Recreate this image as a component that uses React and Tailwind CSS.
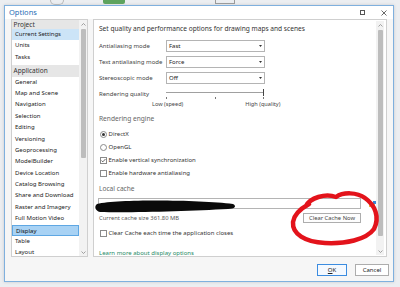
import React from 'react';

const items1 = ['Current Settings', 'Units', 'Tasks'];
const items2 = [
  'General', 'Map and Scene', 'Navigation', 'Selection', 'Editing', 'Versioning',
  'Geoprocessing', 'ModelBuilder', 'Device Location', 'Catalog Browsing',
  'Share and Download', 'Raster and Imagery', 'Full Motion Video', 'Display', 'Table', 'Layout',
];

const Caret = ({ up }) => (
  <svg width="5" height="3" viewBox="0 0 5 3" className="block">
    <path d={up ? 'M0.5 2.5 L2.5 0.5 L4.5 2.5' : 'M0.5 0.5 L2.5 2.5 L4.5 0.5'} stroke="#8a8a8a" strokeWidth="0.8" fill="none" />
  </svg>
);

const Scrollbar = ({ thumbTop, thumbHeight }) => (
  <div className="w-[8px] h-full bg-[#f2f2f2] flex flex-col items-center">
    <div className="h-[8px] flex items-center"><Caret up /></div>
    <div className="w-[5px] bg-[#bdbdbd] rounded-[1px]" style={{ marginTop: thumbTop, height: thumbHeight }} />
    <div className="flex-1" />
    <div className="h-[8px] flex items-center"><Caret /></div>
  </div>
);

const Row = ({ label, value }) => (
  <div className="flex items-center h-[12px]">
    <div className="w-[67px] text-[6px] text-[#444]">{label}</div>
    <div className="w-[99px] h-[12px] border border-[#b4b4b4] bg-white flex items-center justify-between pl-[2px] pr-[2px]">
      <span className="text-[6px] text-[#222]">{value}</span>
      <svg width="3" height="2" viewBox="0 0 3 2"><path d="M0 0 L3 0 L1.5 2 Z" fill="#333" /></svg>
    </div>
  </div>
);

const Radio = ({ label, checked }) => (
  <div className="flex items-center h-[10px]">
    <div className="w-[7px] h-[7px] rounded-full border border-[#8a8a8a] bg-white flex items-center justify-center ml-[0.5px]">
      {checked && <div className="w-[3px] h-[3px] rounded-full bg-[#333]" />}
    </div>
    <span className="ml-[2px] text-[6px] text-[#333]">{label}</span>
  </div>
);

const Check = ({ label, checked }) => (
  <div className="flex items-center h-[10px]">
    <div className="w-[7px] h-[7px] border border-[#8a8a8a] bg-white flex items-center justify-center ml-[0.5px]">
      {checked && (
        <svg width="6" height="5" viewBox="0 0 6 5"><path d="M0.6 2.6 L2.2 4.1 L5.4 0.7" stroke="#333" strokeWidth="0.9" fill="none" /></svg>
      )}
    </div>
    <span className="ml-[2px] text-[6px] text-[#333]">{label}</span>
  </div>
);

export default function App() {
  return (
    <div className="w-[400px] h-[287px] bg-[#eceef1] relative overflow-hidden font-['Noto_Sans',sans-serif]">
      {/* background application strip */}
      <div className="h-[5px] flex items-start">
        <div className="ml-[50px] w-[14px] h-[5px] border-x border-b border-[#b8b8b8] rounded-b-full" />
        <div className="ml-[39px] w-[22px] h-[4px] bg-[#5ea35e] rounded-b-[2px]" />
        <div className="ml-[90px] w-[20px] h-[4px] border-x border-b border-[#9a9a9a]" />
      </div>

      {/* dialog */}
      <div className="ml-[4px] w-[390px] h-[277px] border border-[#7fb0de] bg-[#f6f6f6] flex flex-col shadow-[0_0_3px_rgba(0,0,0,0.15)]">
        {/* title bar */}
        <div className="h-[13px] flex items-center bg-white">
          <span className="ml-[4px] text-[7.5px] text-[#1f6db5] leading-none">Options</span>
          <div className="flex-1" />
          <div className="w-[5px] h-[5px] border border-[#555] mr-[16px]" />
          <svg width="6" height="6" viewBox="0 0 6 6" className="mr-[6px]">
            <path d="M0.5 0.5 L5.5 5.5 M5.5 0.5 L0.5 5.5" stroke="#444" strokeWidth="0.8" />
          </svg>
        </div>

        {/* body */}
        <div className="flex h-[238px] bg-[#f6f6f6]">
          {/* sidebar */}
          <div className="ml-[6px] w-[77px] h-full border border-[#cfcfcf] bg-white flex">
            <div className="flex-1 flex flex-col text-[#222]">
              <div className="h-[9px] leading-[9px] bg-[#e6e6e6] pl-[1.5px] text-[6.5px] text-[#333]">Project</div>
              {items1.map((t, i) => (
                <div key={t} className={`h-[11.4px] leading-[11.4px] pl-[3px] text-[6px] ${i === 0 ? 'bg-[#cce4f7]' : ''}`}>{t}</div>
              ))}
              <div className="mt-[2px] h-[11.4px] leading-[11.4px] bg-[#e6e6e6] pl-[1.5px] text-[6.5px] text-[#333]">Application</div>
              {items2.map((t) => (
                <div
                  key={t}
                  className={`h-[11.4px] leading-[11.4px] pl-[3px] text-[6px] ${t === 'Display' ? 'bg-[#a8d2f4] border border-[#5ea7e3] pl-[2px] leading-[9.4px] text-[#111]' : ''}`}
                >
                  {t}
                </div>
              ))}
            </div>
            <Scrollbar thumbTop={1} thumbHeight={129} />
          </div>

          {/* main panel */}
          <div className="ml-[5px] w-[294px] h-full border border-[#cfcfcf] bg-white flex">
            <div className="flex-1 pl-[5px] pt-[4px] overflow-hidden flex flex-col">
              <div className="h-[10px] leading-[10px] text-[6.6px] text-[#333]">Set quality and performance options for drawing maps and scenes</div>
              <div className="mt-[6px] flex flex-col gap-[4px]">
                <Row label="Antialiasing mode" value="Fast" />
                <Row label="Text antialiasing mode" value="Force" />
                <Row label="Stereoscopic mode" value="Off" />
                <div className="flex items-center h-[12px]">
                  <div className="w-[67px] text-[6px] text-[#444]">Rendering quality</div>
                  <div className="relative w-[100px] h-[12px]">
                    <div className="absolute left-0 right-[3px] top-[4px] h-[1px] bg-[#a0a0a0]" />
                    <div className="absolute right-[2px] top-[1px] w-[1.5px] h-[7px] bg-[#444]" />
                    <div className="absolute left-[0px] top-[9px] w-[1px] h-[2px] bg-[#777]" />
                    <div className="absolute left-[49px] top-[9px] w-[1px] h-[2px] bg-[#777]" />
                    <div className="absolute right-[2px] top-[9px] w-[1px] h-[2px] bg-[#777]" />
                  </div>
                </div>
              </div>
              <div className="h-[8px] leading-[8px] flex text-[5.6px] text-[#444]">
                <span className="ml-[53px]">Low (speed)</span>
                <span className="ml-[62px]">High (quality)</span>
              </div>

              <div className="mt-[6px] h-[10px] leading-[10px] text-[6.6px] text-[#666]">Rendering engine</div>
              <div className="mt-[5px] flex flex-col gap-[3px]">
                <Radio label="DirectX" checked />
                <Radio label="OpenGL" />
                <Check label="Enable vertical synchronization" checked />
                <Check label="Enable hardware antialiasing" />
              </div>

              <div className="mt-[6px] h-[10px] leading-[10px] text-[6.6px] text-[#666]">Local cache</div>
              <div className="mt-[4px] flex items-center -ml-[1px]">
                <div className="w-[263px] h-[11px] border border-[#b4b4b4] bg-white" />
                <svg width="7" height="6" viewBox="0 0 7 6" className="ml-[8px]">
                  <path d="M0 1 L2.5 1 L3 2 L6 2 L6 6 L0 6 Z" fill="#e8b64a" />
                  <rect x="4" y="0" width="3" height="3" fill="#3d86d4" />
                </svg>
              </div>
              <div className="mt-[4px] h-[10px] flex items-center w-[262px]">
                <span className="text-[5.8px] text-[#555]">Current cache size 361.80 MB</span>
                <div className="flex-1" />
                <div className="w-[58px] h-[10px] border border-[#adadad] bg-[#fdfdfd] flex items-center justify-center text-[5.8px] text-[#444]">
                  Clear Cache Now
                </div>
              </div>
              <div className="mt-[5px]">
                <Check label="Clear Cache each time the application closes" />
              </div>
              <div className="mt-[10px] h-[10px] shrink-0 leading-[10px] text-[6px] text-[#1e8a67]">Learn more about display options</div>
            </div>
            <div className="py-[1px] pr-[2px] h-full">
              <Scrollbar thumbTop={1} thumbHeight={206} />
            </div>
          </div>
        </div>

        {/* buttons */}
        <div className="mt-[7px] flex justify-end pr-[4px] gap-[8px]">
          <div className="w-[30px] h-[12px] border border-[#3b8ce0] bg-[#f4f9ff] flex items-center justify-center text-[6px] text-[#222]">
            <span><span className="underline">O</span>K</span>
          </div>
          <div className="w-[34px] h-[12px] border border-[#adadad] bg-white flex items-center justify-center text-[6px] text-[#222]">
            Cancel
          </div>
        </div>
      </div>

      {/* annotations drawn over the screenshot */}
      <svg width="400" height="287" viewBox="0 0 400 287" className="absolute left-0 top-0 pointer-events-none">
        <path d="M97 204 C120 199, 200 200, 233 204 C237 206, 235 209, 228 209 C190 211, 130 213, 100 212 C95 211, 94 206, 97 204 Z" fill="#0a0a0a" />
        <path
          d="M306 206 C310 198, 325 193, 336 197 C343 192, 357 192, 365 198 C375 205, 380 217, 374 229 C366 240, 345 244, 325 243 C305 242, 292 234, 293 222 C294 214, 300 209, 309 204"
          stroke="#e3131b"
          strokeWidth="4.5"
          fill="none"
          strokeLinecap="round"
          strokeLinejoin="round"
        />
      </svg>
    </div>
  );
}
